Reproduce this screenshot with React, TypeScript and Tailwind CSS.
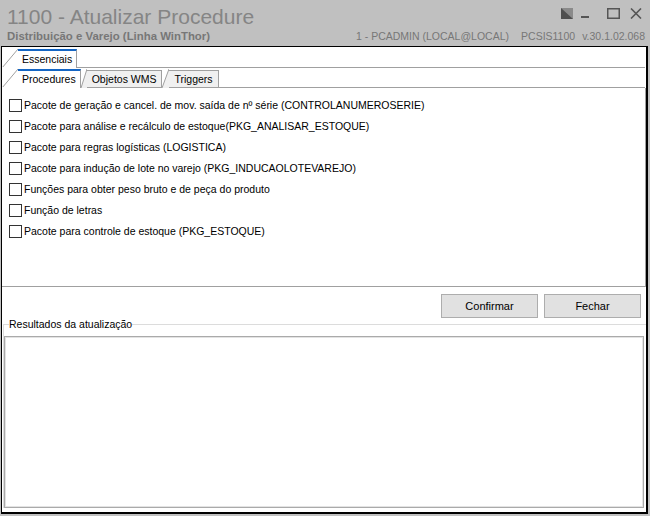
import { FC } from "react"

const items = [
  "Pacote de geração e cancel. de mov. saída de nº série (CONTROLANUMEROSERIE)",
  "Pacote para análise e recálculo de estoque(PKG_ANALISAR_ESTOQUE)",
  "Pacote para regras logísticas (LOGISTICA)",
  "Pacote para indução de lote no varejo (PKG_INDUCAOLOTEVAREJO)",
  "Funções para obter peso bruto e de peça do produto",
  "Função de letras",
  "Pacote para controle de estoque (PKG_ESTOQUE)"
]

const font = { fontFamily: '"Liberation Sans", Arial, sans-serif' }

interface TabProps {
  label: string
  active?: boolean
  slant: number
}

// tab with the little slanted left ear
const Tab: FC<TabProps> = ({ label, active, slant }) => (
  <div className="flex items-end">
    <svg width={slant} height={19} className="block shrink-0">
      {!active && (
        <polygon points={`0,19 ${slant},0 ${slant},19`} fill="#f0f0f0" />
      )}
      <line x1={0} y1={19} x2={slant} y2={0} stroke="#a0a0a0" strokeWidth={1} />
      {active && <line x1={0} y1={18.5} x2={slant} y2={18.5} stroke="white" />}
    </svg>
    {active ? (
      <div className="h-[19px] border-t-2 border-r border-t-[#1566c4] border-r-[#a0a0a0] bg-white px-[4px] leading-[16px] text-[10.5px] text-black">
        {label}
      </div>
    ) : (
      <div className="h-[18px] border-t border-r border-b border-[#a0a0a0] bg-[#f0f0f0] px-[5px] leading-[16px] text-[10.5px] text-black">
        {label}
      </div>
    )}
  </div>
)

const WindowIcons = () => (
  <div className="flex items-center pt-[2px]">
    <svg width={12} height={11} className="block">
      <polygon points="0,0 12,0 12,11 0,11" fill="#8a8a8a" />
      <polygon points="0,0 0,11 12,11" fill="#4f4f4f" />
    </svg>
    <svg width={9} height={11} className="ml-[8px] block">
      <rect x={0} y={8} width={8} height={2} fill="#555" />
    </svg>
    <svg width={13} height={11} className="ml-[17px] block">
      <rect x={0.75} y={0.75} width={11.5} height={9.5} fill="none" stroke="#555" strokeWidth={1.5} />
    </svg>
    <svg width={12} height={11} className="ml-[10px] block">
      <path d="M1 0.5 L11 10.5 M11 0.5 L1 10.5" stroke="#555" strokeWidth={1.6} />
    </svg>
  </div>
)

export default function App() {
  return (
    <div className="flex h-[516px] w-[650px] flex-col bg-[#c0c0c0]" style={font}>
      <div className="flex h-[46px] shrink-0 flex-col pr-[5px] pl-[7px]">
        <div className="flex h-[29px] items-start justify-between">
          <div className="pt-[5px] text-[21px] leading-[24px] text-[#858585]">
            1100 - Atualizar Procedure
          </div>
          <div className="pr-[3px] pt-[6px]">
            <WindowIcons />
          </div>
        </div>
        <div className="flex items-center justify-between pt-[1px] text-[11px] leading-[13px] text-[#777]">
          <span className="text-[11.4px] font-bold">Distribuição e Varejo (Linha WinThor)</span>
          <span className="flex gap-[12px] text-[10.5px]">
            <span>1 - PCADMIN (LOCAL@LOCAL)</span>
            <span className="flex gap-[7px]">
              <span>PCSIS1100</span>
              <span>v.30.1.02.068</span>
            </span>
          </span>
        </div>
      </div>

      <div className="ml-[1px] flex h-[468px] w-[647px] shrink-0 flex-col border border-r-2 border-b-2 border-black bg-white">
        {/* first tab row */}
        <div className="flex h-[21px] shrink-0 items-end pr-[1px]">
          <Tab label="Essenciais" active slant={16} />
          <div className="flex-1 border-b border-[#a0a0a0]" />
        </div>
        {/* second tab row */}
        <div className="flex h-[20px] shrink-0 items-end pr-[1px]">
          <Tab label="Procedures" active slant={16} />
          <Tab label="Objetos WMS" slant={6} />
          <Tab label="Triggers" slant={7} />
          <div className="flex-1 border-b border-[#a0a0a0]" />
        </div>

        <div className="flex h-[199px] shrink-0 flex-col border-r border-b border-[#a0a0a0] pt-[7px] pl-[7px]">
          {items.map(item => (
            <label key={item} className="flex h-[21px] items-center gap-[2px] text-[10.5px] text-black">
              <span className="h-[13px] w-[13px] shrink-0 border border-[#333] bg-white" />
              <span>{item}</span>
            </label>
          ))}
        </div>

        <div className="flex shrink-0 justify-end gap-[6px] pt-[7px] pr-[5px]">
          <button className="h-[24px] w-[97px] border border-[#adadad] bg-[#e1e1e1] text-[11px] text-black">
            Confirmar
          </button>
          <button className="h-[24px] w-[97px] border border-[#adadad] bg-[#e1e1e1] text-[11px] text-black">
            Fechar
          </button>
        </div>

        <fieldset className="ml-[1px] shrink-0 border-t border-l border-[#dcdcdc] pr-[2px]">
          <legend className="ml-[5px] text-[10.5px] leading-[13px] text-black">Resultados da atualização</legend>
          <div className="mt-[5px] h-[172px] border border-[#aaa]">
            <div className="h-full w-full border border-[#e3e3e3] bg-white" />
          </div>
        </fieldset>
      </div>
    </div>
  )
}
